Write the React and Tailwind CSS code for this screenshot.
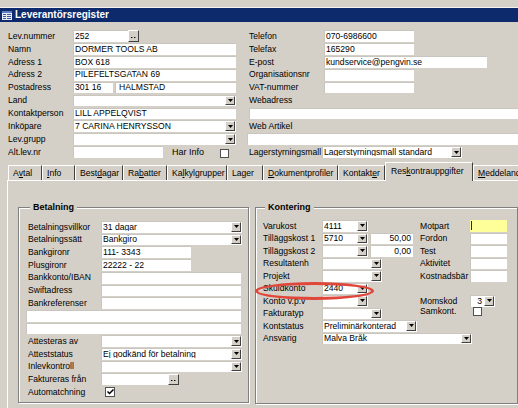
import React from 'react';

// Classic Windows form: grey panels, white sunken fields, tiny 3D buttons.
function Arrow() {
  return (
    <span className="flex h-[9.7px] w-[10px] shrink-0 items-center justify-center border border-t-white border-l-white border-r-[#404040] border-b-[#404040] bg-[#d4d0c8]">
      <svg width="5" height="3" viewBox="0 0 5 3">
        <path d="M0 0h5L2.5 3z" fill="#000" />
      </svg>
    </span>
  );
}

function Dots() {
  return (
    <span className="flex h-[11.2px] w-[11px] shrink-0 items-end justify-center border border-t-white border-l-white border-r-[#404040] border-b-[#404040] bg-[#d4d0c8] pb-[3px]">
      <svg width="5" height="1" viewBox="0 0 5 1">
        <rect x="0" y="0" width="1.4" height="1" fill="#000" />
        <rect x="3" y="0" width="1.4" height="1" fill="#000" />
      </svg>
    </span>
  );
}

function Input({ className = '', value = '', right = false }) {
  return (
    <div
      className={`flex h-[11.7px] shrink-0 items-center overflow-hidden whitespace-nowrap bg-white px-[2px] shadow-[inset_1px_1px_0_#c9c6bf] ${
        right ? 'justify-end' : ''
      } ${className}`}
    >
      {value}
    </div>
  );
}

function Combo({ className = '', value = '', right = false }) {
  return (
    <div className={`flex h-[11.7px] shrink-0 items-center bg-white pl-[2px] pr-[1px] shadow-[inset_1px_1px_0_#c9c6bf] ${className}`}>
      <span className={`flex-1 overflow-hidden whitespace-nowrap ${right ? 'pr-[2px] text-right' : ''}`}>{value}</span>
      <Arrow />
    </div>
  );
}

function Check({ checked = false, className = '' }) {
  return (
    <span className={`flex h-[9px] w-[9px] shrink-0 items-center justify-center border border-[#505050] bg-white ${className}`}>
      {checked && (
        <svg width="7" height="6" viewBox="0 0 7 6">
          <path d="M0.5 2.5l2 2 4-4" fill="none" stroke="#000" strokeWidth="1.5" />
        </svg>
      )}
    </span>
  );
}

function Row({ h = 'h-[12.9px]', children }) {
  return <div className={`flex items-center ${h}`}>{children}</div>;
}

function Label({ w, children }) {
  return <span className={`shrink-0 whitespace-nowrap ${w}`}>{children}</span>;
}

function Tab({ w, children }) {
  return (
    <div className={`flex h-[15px] shrink-0 items-center whitespace-nowrap border-t border-l border-r border-t-white border-l-white border-r-[#404040] pl-[4px] pt-[1px] ${w}`}>
      {children}
    </div>
  );
}

const u = (s) => <span className="underline underline-offset-[1px]">{s}</span>;

export default function App() {
  return (
    <div className="relative h-[408px] w-[518px] overflow-hidden bg-[#d4d0c8] font-['Liberation_Sans',Arial,sans-serif] text-[8.6px] leading-none text-black">
      <div className="h-[8px] border-b border-[#f4f3ef]" />
      <div className="flex h-[14px] items-center gap-[3px] bg-[#0c2a6c] pl-[2px] text-[10px] font-bold text-white">
        <svg width="10" height="9" viewBox="0 0 10 9">
          <rect x="0" y="0" width="10" height="9" fill="#e8ecf4" />
          <rect x="0" y="0" width="10" height="2" fill="#5a7cc0" />
          <rect x="1" y="3" width="3" height="1" fill="#3a5a9c" />
          <rect x="5" y="3" width="4" height="1" fill="#3a5a9c" />
          <rect x="1" y="5" width="3" height="1" fill="#3a5a9c" />
          <rect x="5" y="5" width="4" height="1" fill="#3a5a9c" />
          <rect x="1" y="7" width="3" height="1" fill="#3a5a9c" />
          <rect x="5" y="7" width="4" height="1" fill="#3a5a9c" />
        </svg>
        <span>Leverantörsregister</span>
      </div>

      {/* head fields */}
      <div className="flex h-[140px] pt-[7.6px]">
        <div className="w-[240px] shrink-0 pl-[8px]">
          <Row>
            <Label w="w-[65px]">Lev.nummer</Label>
            <Input className="w-[55px]" value="252" />
            <Dots />
          </Row>
          <Row>
            <Label w="w-[65px]">Namn</Label>
            <Input className="w-[163px]" value="DORMER TOOLS AB" />
          </Row>
          <Row>
            <Label w="w-[65px]">Adress 1</Label>
            <Input className="w-[163px]" value="BOX 618" />
          </Row>
          <Row>
            <Label w="w-[65px]">Adress 2</Label>
            <Input className="w-[163px]" value="PILEFELTSGATAN 69" />
          </Row>
          <Row>
            <Label w="w-[65px]">Postadress</Label>
            <Input className="w-[40px]" value="301 16" />
            <Input className="ml-[2px] w-[121px] pl-[4px]" value="HALMSTAD" />
          </Row>
          <Row>
            <Label w="w-[65px]">Land</Label>
            <Combo className="w-[163px]" />
          </Row>
          <Row>
            <Label w="w-[65px]">Kontaktperson</Label>
            <Input className="w-[163px]" value="LILL APPELQVIST" />
          </Row>
          <Row>
            <Label w="w-[65px]">Inköpare</Label>
            <Combo className="w-[163px]" value="7 CARINA HENRYSSON" />
          </Row>
          <Row>
            <Label w="w-[65px]">Lev.grupp</Label>
            <Combo className="w-[163px]" />
          </Row>
          <Row>
            <Label w="w-[65px]">Alt.lev.nr</Label>
            <Input className="w-[90px]" />
            <span className="ml-[9px] w-[48px] shrink-0 text-[9px]">Har Info</span>
            <Check className="mt-[3px]" />
          </Row>
        </div>

        <div className="w-[290px] shrink-0 pl-[9px]">
          <Row>
            <Label w="w-[75px]">Telefon</Label>
            <Input className="w-[90px]" value="070-6986600" />
          </Row>
          <Row>
            <Label w="w-[75px]">Telefax</Label>
            <Input className="w-[90px]" value="165290" />
          </Row>
          <Row>
            <Label w="w-[75px]">E-post</Label>
            <Input className="w-[163px]" value="kundservice@pengvin.se" />
          </Row>
          <Row>
            <Label w="w-[75px]">Organisationsnr</Label>
            <Input className="w-[90px]" />
          </Row>
          <Row>
            <Label w="w-[75px]">VAT-nummer</Label>
            <Input className="w-[90px]" />
          </Row>
          <Row>
            <Label w="w-[75px]">Webadress</Label>
          </Row>
          <Row>
            <Input className="w-[280px]" />
          </Row>
          <Row>
            <Label w="w-[75px]">Web Artikel</Label>
          </Row>
          <Row>
            <Input className="-ml-[2px] w-[282px]" />
          </Row>
          <Row>
            <Label w="w-[73px]">Lagerstyrningsmall</Label>
            <Combo className="w-[140px]" value="Lagerstyrningsmall standard" />
          </Row>
        </div>
      </div>

      {/* tabs */}
      <div className="flex h-[18px] items-end pl-[8px]">
        <Tab w="w-[34px]">A{u('v')}tal</Tab>
        <Tab w="w-[33px]">{u('I')}nfo</Tab>
        <Tab w="w-[48px]">Best{u('d')}agar</Tab>
        <Tab w="w-[44px]">Ra{u('b')}atter</Tab>
        <Tab w="w-[60px]">Ka{u('l')}kylgrupper</Tab>
        <Tab w="w-[36px]">Lager</Tab>
        <Tab w="w-[75px]">{u('D')}okumentprofiler</Tab>
        <Tab w="w-[47px]">Kontakt{u('e')}r</Tab>
        <div className="relative z-10 -mb-[1px] flex h-[19px] w-[88px] shrink-0 items-center whitespace-nowrap border-t border-l border-r border-t-white border-l-white border-r-[#404040] bg-[#d4d0c8] pb-[2px] pl-[5px]">
          Res{u('k')}ontrauppgifter
        </div>
        <Tab w="w-[60px]">{u('M')}eddelande</Tab>
      </div>

      {/* tab page */}
      <div className="ml-[7px] flex h-[240px] border-t border-l border-white pl-[10px]">
        <fieldset className="mt-[21px] h-[201px] w-[231px] shrink-0 border border-[#808080] pl-[7px] pr-[6px] shadow-[inset_1px_1px_0_#fff,1px_1px_0_#fff]">
          <legend className="ml-[4px] bg-[#d4d0c8] px-[3px] text-[9px] font-bold leading-[11px]">Betalning</legend>
          <div className="mt-[7.6px]">
            <Row h="h-[12.7px]">
              <Label w="w-[75px] pl-[2px]">Betalningsvillkor</Label>
              <Combo className="w-[141px]" value="31 dagar" />
            </Row>
            <Row h="h-[12.7px]">
              <Label w="w-[75px] pl-[2px]">Betalningssätt</Label>
              <Combo className="w-[141px]" value="Bankgiro" />
            </Row>
            <Row h="h-[12.7px]">
              <Label w="w-[75px] pl-[2px]">Bankgironr</Label>
              <Input className="w-[90px]" value="111- 3343" />
            </Row>
            <Row h="h-[12.7px]">
              <Label w="w-[75px] pl-[2px]">Plusgironr</Label>
              <Input className="w-[90px]" value="22222 - 22" />
            </Row>
            <Row h="h-[12.7px]">
              <Label w="w-[75px] pl-[2px]">Bankkonto/IBAN</Label>
              <Input className="w-[140px]" />
            </Row>
            <Row h="h-[12.7px]">
              <Label w="w-[75px] pl-[2px]">Swiftadress</Label>
              <Input className="w-[140px]" />
            </Row>
            <Row h="h-[12.7px]">
              <Label w="w-[75px] pl-[2px]">Bankreferenser</Label>
              <Input className="w-[140px]" />
            </Row>
            <Row h="h-[12.7px]">
              <Input className="w-[215px]" />
            </Row>
            <Row h="h-[12.7px]">
              <Input className="w-[215px]" />
            </Row>
            <Row h="h-[12.7px]">
              <Label w="w-[75px] pl-[2px]">Attesteras av</Label>
              <Combo className="w-[141px]" />
            </Row>
            <Row h="h-[12.7px]">
              <Label w="w-[75px] pl-[2px]">Atteststatus</Label>
              <Combo className="w-[141px]" value="Ej godkänd för betalning" />
            </Row>
            <Row h="h-[12.7px]">
              <Label w="w-[75px] pl-[2px]">Inlevkontroll</Label>
              <Combo className="w-[141px]" />
            </Row>
            <Row h="h-[12.7px]">
              <Label w="w-[75px] pl-[2px]">Faktureras från</Label>
              <Input className="w-[67px]" />
              <Dots />
            </Row>
            <Row h="h-[12.7px]">
              <Label w="w-[75px] pl-[2px]">Automatchning</Label>
              <Check checked className="ml-[4px] h-[10px] w-[10px]" />
            </Row>
          </div>
        </fieldset>

        <fieldset className="mt-[21px] ml-[6px] h-[202px] w-[263px] shrink-0 border border-[#808080] pl-[7px] shadow-[inset_1px_1px_0_#fff,1px_1px_0_#fff]">
          <legend className="ml-[2px] bg-[#d4d0c8] px-[3px] text-[9px] font-bold leading-[11px]">Kontering</legend>
          <div className="mt-[6.6px]">
            <Row h="h-[12.5px]">
              <div className="flex w-[157px] shrink-0 items-center">
                <Label w="w-[59px]">Varukost</Label>
                <Combo className="w-[46px]" value="4111" />
              </div>
              <Label w="w-[50px]">Motpart</Label>
              <div className="flex h-[11.7px] w-[37px] items-center bg-[#ffff99] pl-[1px]">
                <span className="h-[9px] w-[1px] bg-[#0c2a6c]" />
              </div>
            </Row>
            <Row h="h-[12.5px]">
              <div className="flex w-[157px] shrink-0 items-center">
                <Label w="w-[59px]">Tilläggskost 1</Label>
                <Combo className="w-[46px]" value="5710" />
                <Input className="ml-[2px] w-[43px]" value="50,00" right />
              </div>
              <Label w="w-[50px]">Fordon</Label>
              <Input className="w-[37px]" />
            </Row>
            <Row h="h-[12.5px]">
              <div className="flex w-[157px] shrink-0 items-center">
                <Label w="w-[59px]">Tilläggskost 2</Label>
                <Combo className="w-[46px]" />
                <Input className="ml-[2px] w-[43px]" value="0,00" right />
              </div>
              <Label w="w-[50px]">Test</Label>
              <Input className="w-[37px]" />
            </Row>
            <Row h="h-[12.5px]">
              <div className="flex w-[157px] shrink-0 items-center">
                <Label w="w-[59px]">Resultatenh</Label>
                <Combo className="w-[60px]" />
              </div>
              <Label w="w-[50px]">Aktivitet</Label>
              <Input className="w-[37px]" />
            </Row>
            <Row h="h-[12.5px]">
              <div className="flex w-[157px] shrink-0 items-center">
                <Label w="w-[59px]">Projekt</Label>
                <Combo className="w-[60px]" />
              </div>
              <Label w="w-[50px]">Kostnadsbär</Label>
              <Input className="w-[37px]" />
            </Row>
            <Row h="h-[12.5px]">
              <div className="flex w-[157px] shrink-0 items-center">
                <Label w="w-[59px]">Skuldkonto</Label>
                <Combo className="w-[46px]" value="2440" />
              </div>
            </Row>
            <Row h="h-[12.5px]">
              <div className="flex w-[157px] shrink-0 items-center">
                <Label w="w-[59px]">Konto v.p.v</Label>
                <Combo className="w-[46px]" />
              </div>
              <Label w="w-[50px]">Momskod</Label>
              <Combo className="w-[25px]" value="3" right />
            </Row>
            <Row h="h-[12.5px]">
              <div className="flex w-[157px] shrink-0 items-center">
                <Label w="w-[59px]">Fakturatyp</Label>
                <Combo className="w-[60px]" />
              </div>
              <Label w="w-[53px]">
                <span className="relative -top-[2px]">Samkont.</span>
              </Label>
              <Check className="-mt-[3px]" />
            </Row>
            <Row h="h-[12.5px]">
              <Label w="w-[59px]">Kontstatus</Label>
              <Combo className="w-[95px]" value="Preliminärkonterad" />
            </Row>
            <Row h="h-[12.5px]">
              <Label w="w-[59px]">Ansvarig</Label>
              <Combo className="w-[150px]" value="Malva Bråk" />
            </Row>
          </div>
        </fieldset>
      </div>

      {/* highlight drawn over the Skuldkonto row */}
      <div className="absolute left-[255px] top-[282px] h-[18px] w-[119px] rounded-[50%] border-[3px] border-[#e0463a]" />
    </div>
  );
}
